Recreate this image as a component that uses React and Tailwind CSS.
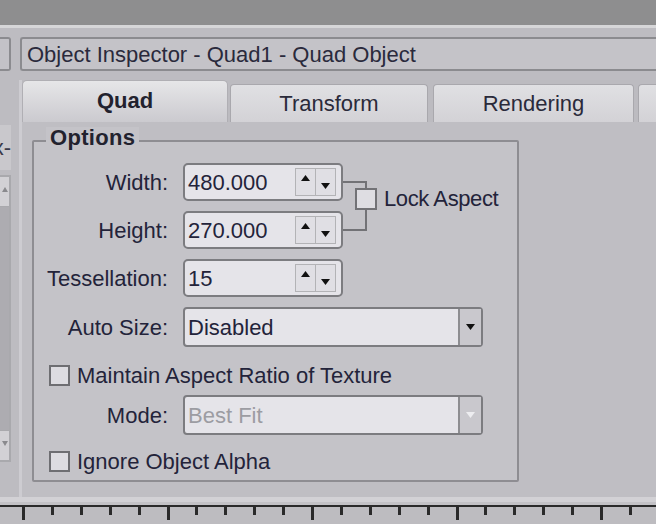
import React from "react";

const font = { fontFamily: '"Liberation Sans", Arial, sans-serif' };

function UpTri({ color = "#111" }) {
  return (
    <svg width="9" height="6" viewBox="0 0 9 6"><path d="M0 6 L4.5 0 L9 6 Z" fill={color} /></svg>
  );
}
function DownTri({ color = "#111" }) {
  return (
    <svg width="9" height="6" viewBox="0 0 9 6"><path d="M0 0 L4.5 6 L9 0 Z" fill={color} /></svg>
  );
}

function SpinBox({ value }) {
  return (
    <div className="w-[160px] h-[38px] rounded-[5px] border-2 border-[#7c7c80] bg-[#e5e4e9] flex items-center pl-[3px] pr-[5px]">
      <span className="flex-1 text-[22px] text-[#23233a] leading-none pt-[1px]">{value}</span>
      <div className="flex h-[28px] border border-[#b3b3b6]">
        <div className="w-[20px] flex items-start justify-center pt-[6px] bg-[#e0dfe4] border-r border-[#b3b3b6]">
          <UpTri />
        </div>
        <div className="w-[19px] flex items-end justify-center pb-[6px] bg-[#e0dfe4]">
          <DownTri />
        </div>
      </div>
    </div>
  );
}

function Dropdown({ value, disabled }) {
  return (
    <div className="w-[300px] h-[40px] rounded-[4px] border-2 border-[#7c7c80] bg-[#e5e4e9] flex items-stretch">
      <span className={"flex-1 flex items-center pl-[3px] pt-[1px] text-[22px] leading-none " + (disabled ? "text-[#9c9ca2]" : "text-[#23233a]")}>{value}</span>
      <div className="w-[23px] border-l-2 border-[#8d8d91] bg-[#c9c8cd] flex items-center justify-center">
        {disabled ? <DownTri color="#ededf0" /> : <DownTri />}
      </div>
    </div>
  );
}

function Label({ children }) {
  return (
    <div className="w-[132px] text-right text-[22px] text-[#23233a] leading-none whitespace-nowrap pt-[1px]">{children}</div>
  );
}

function CheckBox() {
  return <div className="w-[21px] h-[21px] border-2 border-[#6e6e72] bg-[#dddce1] shrink-0" />;
}

function Ruler() {
  const ticks = [];
  for (let i = 0; i < 23; i++) {
    const x = 23 + i * 28.9;
    const major = i % 5 === 0;
    ticks.push(<rect key={i} x={Math.round(x) - 1} y={0} width={3} height={major ? 13 : 8} fill="#2a2a2a" />);
  }
  return (
    <svg width="656" height="17" viewBox="0 0 656 17" className="block">
      {ticks}
    </svg>
  );
}

export default function App() {
  return (
    <div className="w-[656px] h-[524px] overflow-hidden bg-[#bcbbc0] flex flex-col" style={font}>
      <div className="h-[25px] bg-[#8e8e8f] shrink-0" />
      <div className="h-[3px] bg-[#d6d6d8] shrink-0" />
      <div className="h-[52px] shrink-0 flex items-start pt-[9px] bg-[#bdbcc1]">
        <div className="w-[11px] h-[34px] border-2 border-l-0 border-[#8b8b8f] rounded-r-[3px] bg-[#c3c2c7]" />
        <div className="ml-[9px] flex-1 h-[34px] border-2 border-r-0 border-[#8b8b8f] rounded-l-[3px] bg-[#c4c3c8] flex items-center pl-[5px] pt-[2px]">
          <span className="text-[22px] text-[#2a2a3c] leading-none whitespace-nowrap">Object Inspector - Quad1 - Quad Object</span>
        </div>
      </div>
      <div className="flex-1 flex min-h-0">
        <div className="w-[22px] shrink-0 flex flex-col border-r-[3px] border-[#cdccd1] bg-[#bdbcc1]">
          <div className="h-[45px]" />
          <div className="w-[11px] h-[45px] bg-[#c9c8cc] flex items-center justify-end overflow-hidden">
            <span className="text-[22px] text-[#3a3a48] leading-none whitespace-nowrap">x-</span>
          </div>
          <div className="h-[5px]" />
          <div className="w-[11px] h-[287px] border-2 border-l-0 border-[#a9a9ad] flex flex-col">
            <div className="h-[30px] bg-[#d2d1d5] border-b border-[#a9a9ad] flex items-start justify-end pt-[10px] pr-[1px]">
              <svg width="6" height="5" viewBox="0 0 6 5"><path d="M0 5 L3 0 L6 5Z" fill="#8a8a8e" /></svg>
            </div>
            <div className="flex-1 bg-[#adacb1]" />
            <div className="h-[30px] bg-[#d2d1d5] border-t border-[#a9a9ad] flex items-start justify-end pt-[10px] pr-[1px]">
              <svg width="6" height="5" viewBox="0 0 6 5"><path d="M0 0 L3 5 L6 0Z" fill="#8a8a8e" /></svg>
            </div>
          </div>
        </div>
        <div className="flex-1 flex flex-col min-w-0">
          <div className="h-[42px] shrink-0 flex items-end">
            <div className="w-[206px] h-[42px] rounded-t-[5px] bg-gradient-to-b from-[#e6e6e8] to-[#cbcacf] border-x border-t border-[#b0afb4] flex items-center justify-center pb-[1px]">
              <span className="text-[22px] font-bold text-[#22222e] leading-none">Quad</span>
            </div>
            <div className="ml-[2px] w-[198px] h-[38px] rounded-t-[4px] bg-gradient-to-b from-[#e0e0e3] to-[#d3d2d6] border border-b-0 border-[#a9a8ad] flex items-center justify-center">
              <span className="text-[22px] text-[#2a2a3a] leading-none">Transform</span>
            </div>
            <div className="ml-[5px] w-[201px] h-[38px] rounded-t-[4px] bg-gradient-to-b from-[#e0e0e3] to-[#d3d2d6] border border-b-0 border-[#a9a8ad] flex items-center justify-center">
              <span className="text-[22px] text-[#2a2a3a] leading-none">Rendering</span>
            </div>
            <div className="ml-[4px] flex-1 h-[38px] rounded-tl-[4px] bg-gradient-to-b from-[#e0e0e3] to-[#d3d2d6] border-l border-t border-[#a9a8ad]" />
          </div>
          <div className="h-[375px] shrink-0 bg-[#bfbec3] pl-[10px] pt-[18px]">
            <div className="relative w-[487px] h-[342px] border-2 border-[#8e8d92] rounded-[2px] bg-[#c4c3c8] flex flex-col pt-[21px] pl-[2px]">
              <div className="absolute left-[12px] top-[-15px] px-[4px] bg-[#c4c3c8]">
                <span className="text-[22px] font-bold text-[#22222e] leading-none tracking-[0.3px]">Options</span>
              </div>
              <div className="flex">
                <div className="flex flex-col gap-[10px]">
                  <div className="flex items-center gap-[15px]">
                    <Label>Width:</Label>
                    <SpinBox value="480.000" />
                  </div>
                  <div className="flex items-center gap-[15px]">
                    <Label>Height:</Label>
                    <SpinBox value="270.000" />
                  </div>
                </div>
                <div className="flex items-center">
                  <div className="relative w-[24px] h-[50px] border-2 border-l-0 border-[#727276]">
                    <div className="absolute right-[-12px] top-[5px] w-[22px] h-[22px] border-2 border-[#727276] bg-[#dedde2]" />
                  </div>
                  <span className="ml-[17px] mb-[15px] text-[22px] text-[#23233a] leading-none whitespace-nowrap tracking-[-0.4px]">Lock Aspect</span>
                </div>
              </div>
              <div className="flex items-center gap-[15px] mt-[10px]">
                <Label>Tessellation:</Label>
                <SpinBox value="15" />
              </div>
              <div className="flex items-center gap-[15px] mt-[10px]">
                <Label>Auto Size:</Label>
                <Dropdown value="Disabled" />
              </div>
              <div className="flex items-center mt-[17px] pl-[13px] gap-[7px]">
                <CheckBox />
                <span className="text-[22px] text-[#23233a] leading-none whitespace-nowrap pt-[1px]">Maintain Aspect Ratio of Texture</span>
              </div>
              <div className="flex items-center gap-[15px] mt-[8px]">
                <Label>Mode:</Label>
                <Dropdown value="Best Fit" disabled />
              </div>
              <div className="flex items-center mt-[15px] pl-[13px] gap-[7px]">
                <CheckBox />
                <span className="text-[22px] text-[#23233a] leading-none whitespace-nowrap pt-[1px]">Ignore Object Alpha</span>
              </div>
            </div>
          </div>
        </div>
      </div>
      <div className="h-[5px] shrink-0 bg-[#d2d1d5]" />
      <div className="h-[3px] shrink-0 bg-[#c3c2c6]" />
      <div className="h-[2px] shrink-0 bg-[#2a2a2a]" />
      <div className="shrink-0 bg-[#bdbcc0]">
        <Ruler />
      </div>
    </div>
  );
}
